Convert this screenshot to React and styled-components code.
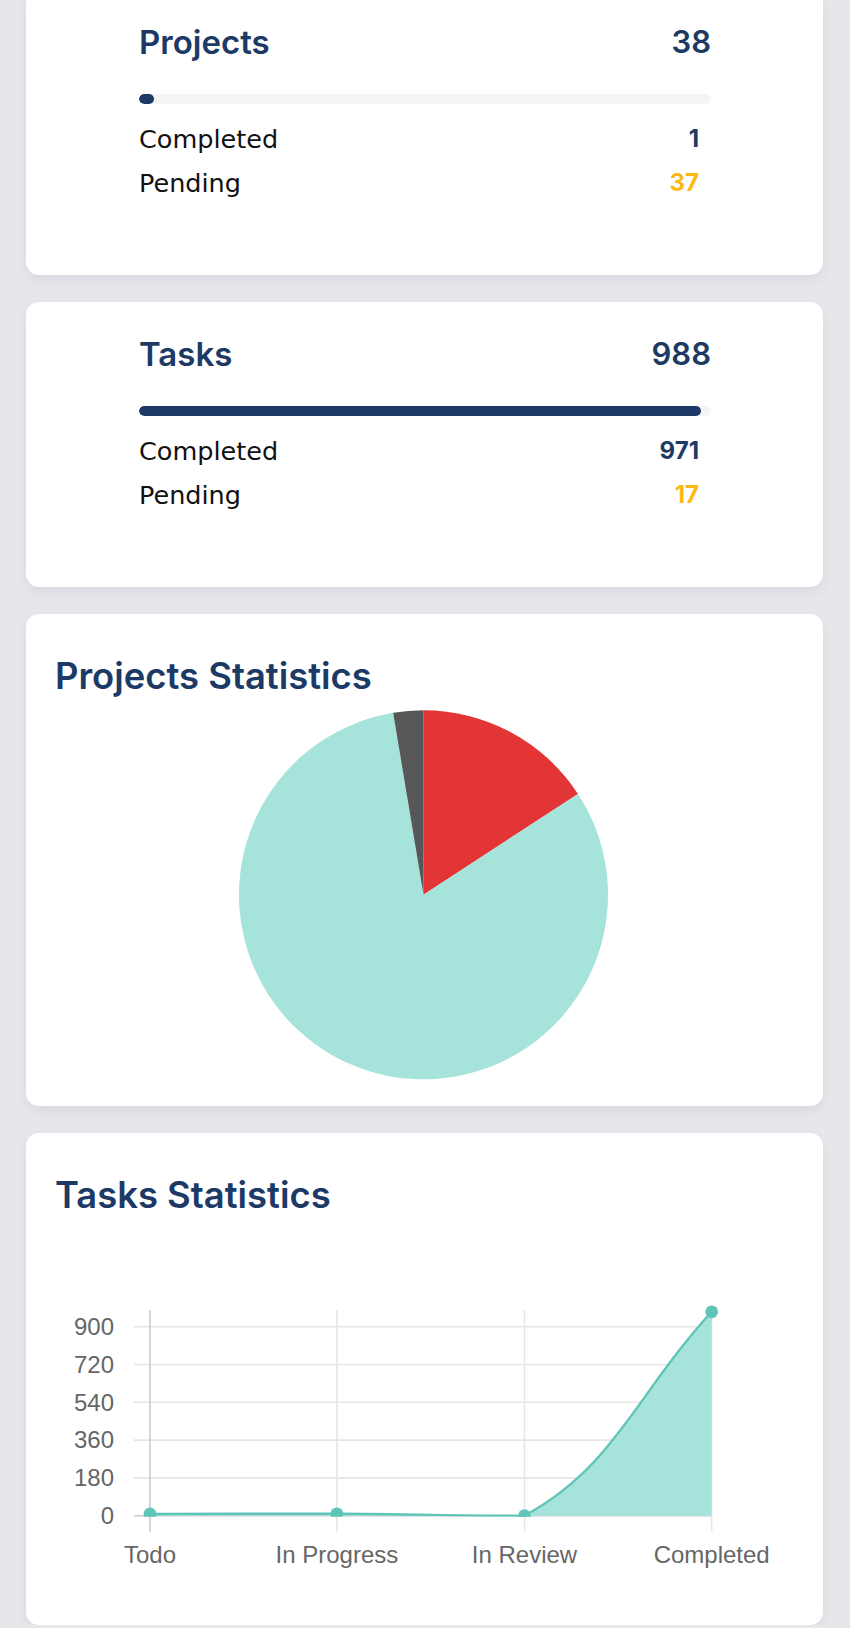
import React from "react";
import styled, { createGlobalStyle } from "styled-components";

const NAVY = "#1c3a65";
const AMBER = "#fdb813";
const TEAL_FILL = "#a6e3db";
const TEAL_LINE = "#5fc5b8";

const GlobalStyle = createGlobalStyle`
  *, *::before, *::after { box-sizing: border-box; }
  html, body { margin: 0; padding: 0; background: #e5e7eb; }
  body { font-family: Inter, "Noto Sans", sans-serif; }
`;

const Page = styled.main`
  display: flex;
  flex-direction: column;
  gap: 27px;
  padding: 0 27px 0 26px;
  margin-top: -10px;
`;

const Card = styled.section`
  background: #ffffff;
  border-radius: 13px;
  box-shadow: 0 5px 12px rgba(15, 23, 42, 0.06);
`;

const SummaryCard = styled(Card)`
  height: 285px;
  padding: 28px 112px 0 113px;
`;

const HeaderRow = styled.div`
  display: flex;
  align-items: center;
  justify-content: space-between;
  height: 48px;
`;

const CardTitle = styled.h2`
  margin: 0;
  font: 600 33px/48px Inter, sans-serif;
  color: ${NAVY};
`;

const Total = styled.span`
  font: 600 31px/48px Inter, sans-serif;
  color: ${NAVY};
`;

const Track = styled.div`
  margin-top: 28px;
  height: 10px;
  border-radius: 5px;
  background: #f4f4f5;
  overflow: hidden;
`;

const Fill = styled.div`
  height: 100%;
  border-radius: 5px;
  background: ${NAVY};
`;

const Rows = styled.div`
  display: flex;
  flex-direction: column;
  margin-top: 13px;
  padding-right: 12px;
`;

const Row = styled.div`
  display: flex;
  align-items: center;
  justify-content: space-between;
  height: 44px;
`;

const Label = styled.span`
  font: 400 25.5px/44px "DejaVu Sans", sans-serif;
  color: #111111;
`;

const Value = styled.span`
  font: 700 24px/44px Inter, sans-serif;
  color: ${(p) => (p.$tone === "amber" ? AMBER : NAVY)};
`;

const StatCard = styled(Card)`
  display: flex;
  flex-direction: column;
  height: 492px;
  padding: 40px 29px 26px;
`;

const StatTitle = styled.h2`
  margin: 0;
  font: 600 36.4px/44px Inter, sans-serif;
  color: ${NAVY};
`;

const ChartBox = styled.div`
  margin-top: 12px;
  height: 370px;
  svg {
    display: block;
  }
`;

function Summary({ title, total, completed, pending }) {
  const pct = (completed / total) * 100;
  return (
    <SummaryCard>
      <HeaderRow>
        <CardTitle>{title}</CardTitle>
        <Total>{total}</Total>
      </HeaderRow>
      <Track>
        <Fill style={{ width: `${pct}%` }} />
      </Track>
      <Rows>
        <Row>
          <Label>Completed</Label>
          <Value $tone="navy">{completed}</Value>
        </Row>
        <Row>
          <Label>Pending</Label>
          <Value $tone="amber">{pending}</Value>
        </Row>
      </Rows>
    </SummaryCard>
  );
}

function PieChart({ data }) {
  const cx = 368.5;
  const cy = 184.8;
  const r = 184.5;
  const total = data.reduce((s, d) => s + d.value, 0);
  let start = 0;
  const pt = (a) => [cx + r * Math.sin(a), cy - r * Math.cos(a)];
  return (
    <svg width="739" height="370" viewBox="0 0 739 370">
      {data.map((d) => {
        const sweep = (d.value / total) * Math.PI * 2;
        const a0 = start;
        const a1 = start + sweep;
        start = a1;
        const [x0, y0] = pt(a0);
        const [x1, y1] = pt(a1);
        const large = sweep > Math.PI ? 1 : 0;
        return (
          <path
            key={d.label}
            d={`M${cx},${cy} L${x0},${y0} A${r},${r} 0 ${large} 1 ${x1},${y1} Z`}
            fill={d.color}
          />
        );
      })}
    </svg>
  );
}

function LineChart({ labels, values }) {
  const zeroY = 1515.7;
  const perUnit = 37.8 / 180;
  const xs = [150, 336.9, 524.5, 711.7];
  const top = 1310;
  const pts = values.map((v, i) => ({ x: xs[i], y: zeroY - v * perUnit }));
  const t = 0.4;
  const cps = pts.map((p, i) => {
    const prev = pts[i - 1] || p;
    const next = pts[i + 1] || p;
    const d01 = Math.hypot(p.x - prev.x, p.y - prev.y);
    const d12 = Math.hypot(next.x - p.x, next.y - p.y);
    let s01 = d01 / (d01 + d12);
    let s12 = d12 / (d01 + d12);
    if (!isFinite(s01)) s01 = 0;
    if (!isFinite(s12)) s12 = 0;
    const fa = t * s01;
    const fb = t * s12;
    const clampY = (y) => Math.max(pts[3].y, Math.min(zeroY, y));
    return {
      prev: { x: p.x - fa * (next.x - prev.x), y: clampY(p.y - fa * (next.y - prev.y)) },
      next: { x: p.x + fb * (next.x - prev.x), y: clampY(p.y + fb * (next.y - prev.y)) },
    };
  });
  let line = `M${pts[0].x},${pts[0].y}`;
  for (let i = 1; i < pts.length; i++) {
    const a = cps[i - 1].next;
    const b = cps[i].prev;
    line += ` C${a.x},${a.y} ${b.x},${b.y} ${pts[i].x},${pts[i].y}`;
  }
  const area = `${line} L${pts[pts.length - 1].x},${zeroY} L${pts[0].x},${zeroY} Z`;
  const ticks = [0, 180, 360, 540, 720, 900];

  return (
    <svg width="739" height="370" viewBox="55 1229 739 370">
      <defs>
        <clipPath id="plot">
          <rect x="120" y="1290" width="620" height={zeroY - 1290 + 1} />
        </clipPath>
      </defs>
      {ticks.map((v) => {
        const y = zeroY - v * perUnit;
        return (
          <g key={v}>
            <line
              x1="134"
              x2="711.7"
              y1={y}
              y2={y}
              stroke={v === 0 ? "#cccccc" : "#e6e6e6"}
              strokeWidth="1.6"
            />
            <text
              x="114"
              y={y + 8.2}
              textAnchor="end"
              fontFamily="'Liberation Sans', Arial, sans-serif"
              fontSize="24"
              fill="#666666"
            >
              {v}
            </text>
          </g>
        );
      })}
      {xs.map((x, i) => (
        <g key={labels[i]}>
          <line
            x1={x}
            x2={x}
            y1={top}
            y2="1531.7"
            stroke={i === 0 ? "#cccccc" : "#e6e6e6"}
            strokeWidth="1.6"
          />
          <text
            x={x}
            y="1562.5"
            textAnchor="middle"
            fontFamily="'Liberation Sans', Arial, sans-serif"
            fontSize="24"
            fill="#666666"
          >
            {labels[i]}
          </text>
        </g>
      ))}
      <g clipPath="url(#plot)">
        <path d={area} fill={TEAL_FILL} />
        <path d={line} fill="none" stroke={TEAL_LINE} strokeWidth="2.4" />
        {pts.map((p, i) => (
          <circle key={i} cx={p.x} cy={p.y} r="6.4" fill={TEAL_LINE} />
        ))}
      </g>
    </svg>
  );
}

export default function App() {
  return (
    <>
      <GlobalStyle />
      <Page>
        <Summary title="Projects" total={38} completed={1} pending={37} />
        <Summary title="Tasks" total={988} completed={971} pending={17} />
        <StatCard>
          <StatTitle>Projects Statistics</StatTitle>
          <ChartBox>
            <PieChart
              data={[
                { label: "In Progress", value: 6, color: "#e43536" },
                { label: "Pending", value: 31, color: TEAL_FILL },
                { label: "Completed", value: 1, color: "#575757" },
              ]}
            />
          </ChartBox>
        </StatCard>
        <StatCard>
          <StatTitle>Tasks Statistics</StatTitle>
          <ChartBox>
            <LineChart
              labels={["Todo", "In Progress", "In Review", "Completed"]}
              values={[8, 9, 0, 971]}
            />
          </ChartBox>
        </StatCard>
      </Page>
    </>
  );
}
